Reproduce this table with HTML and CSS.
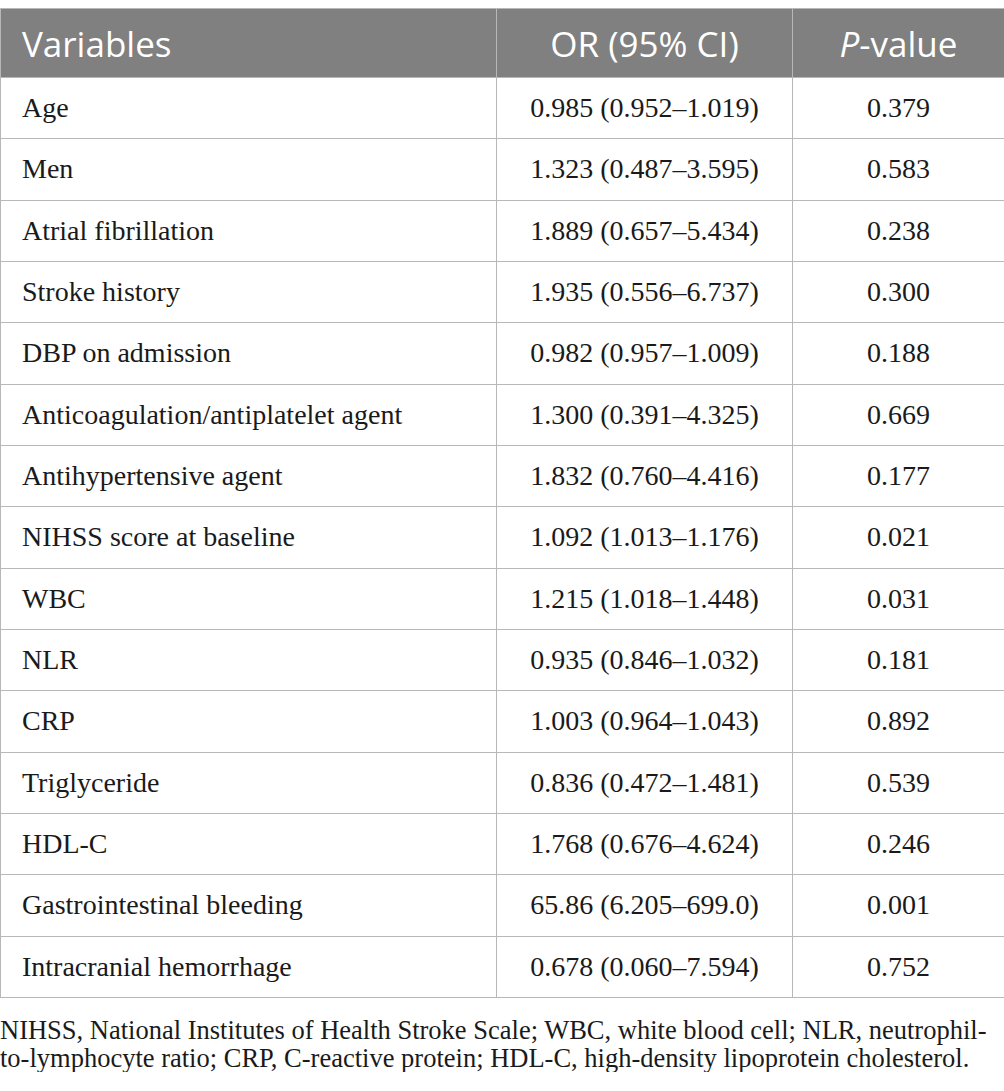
FILE: index.html
```html
<!DOCTYPE html>
<html>
<head>
<meta charset="utf-8">
<link rel="stylesheet" href="styles.css">
</head>
<body>
<table class="data">
  <colgroup>
    <col class="c1"><col class="c2"><col class="c3">
  </colgroup>
  <thead>
    <tr><th class="left">Variables</th><th>OR (95% CI)</th><th><i>P</i>-value</th></tr>
  </thead>
  <tbody>
    <tr><td class="left">Age</td><td>0.985 (0.952–1.019)</td><td>0.379</td></tr>
    <tr><td class="left">Men</td><td>1.323 (0.487–3.595)</td><td>0.583</td></tr>
    <tr><td class="left">Atrial fibrillation</td><td>1.889 (0.657–5.434)</td><td>0.238</td></tr>
    <tr><td class="left">Stroke history</td><td>1.935 (0.556–6.737)</td><td>0.300</td></tr>
    <tr><td class="left">DBP on admission</td><td>0.982 (0.957–1.009)</td><td>0.188</td></tr>
    <tr><td class="left">Anticoagulation/antiplatelet agent</td><td>1.300 (0.391–4.325)</td><td>0.669</td></tr>
    <tr><td class="left">Antihypertensive agent</td><td>1.832 (0.760–4.416)</td><td>0.177</td></tr>
    <tr><td class="left">NIHSS score at baseline</td><td>1.092 (1.013–1.176)</td><td>0.021</td></tr>
    <tr><td class="left">WBC</td><td>1.215 (1.018–1.448)</td><td>0.031</td></tr>
    <tr><td class="left">NLR</td><td>0.935 (0.846–1.032)</td><td>0.181</td></tr>
    <tr><td class="left">CRP</td><td>1.003 (0.964–1.043)</td><td>0.892</td></tr>
    <tr><td class="left">Triglyceride</td><td>0.836 (0.472–1.481)</td><td>0.539</td></tr>
    <tr><td class="left">HDL-C</td><td>1.768 (0.676–4.624)</td><td>0.246</td></tr>
    <tr><td class="left">Gastrointestinal bleeding</td><td>65.86 (6.205–699.0)</td><td>0.001</td></tr>
    <tr><td class="left">Intracranial hemorrhage</td><td>0.678 (0.060–7.594)</td><td>0.752</td></tr>
  </tbody>
</table>
<p class="note">NIHSS, National Institutes of Health Stroke Scale; WBC, white blood cell; NLR, neutrophil-to-lymphocyte ratio; CRP, C-reactive protein; HDL-C, high-density lipoprotein cholesterol.</p>
</body>
</html>
```
FILE: styles.css
```css
html, body {
  margin: 0;
  padding: 0;
  background: #fff;
}
body {
  padding-top: 8px;
}
.data {
  width: 1004px;
  border-collapse: collapse;
  table-layout: fixed;
  font-family: "Liberation Serif", "Times New Roman", serif;
  font-size: 28px;
  color: #1a1a1a;
}
.c1 { width: 496px; }
.c2 { width: 296px; }
.c3 { width: 212px; }
.data th, .data td {
  border: 1px solid #b8b8b8;
  text-align: center;
  padding: 0 21px;
  white-space: nowrap;
}
.data th {
  background: #808080;
  color: #fff;
  font-family: "Open Sans", sans-serif;
  font-weight: 400;
  font-size: 35px;
  height: 68px;
}
.data td {
  height: 60.33px;
}
.data .left {
  text-align: left;
}
.note {
  margin: 18px 0 0;
  font-family: "Liberation Serif", "Times New Roman", serif;
  font-size: 26.5px;
  line-height: 28px;
  color: #1a1a1a;
}
```
